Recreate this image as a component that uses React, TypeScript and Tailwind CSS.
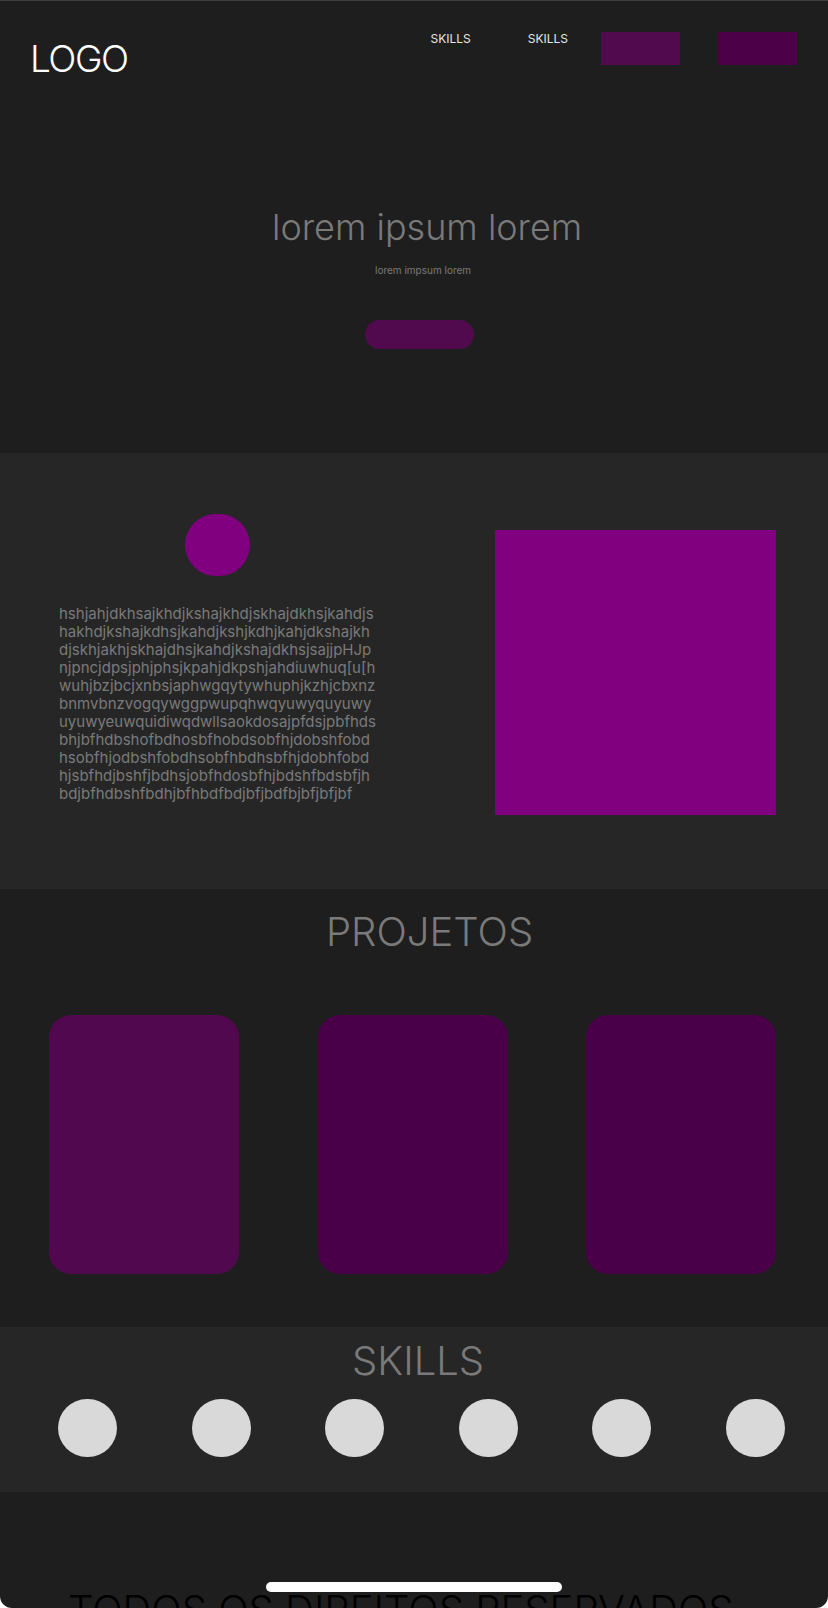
const font = "font-['Inter','Liberation_Sans',sans-serif]";

const aboutLines = [
  "hshjahjdkhsajkhdjkshajkhdjskhajdkhsjkahdjs",
  "hakhdjkshajkdhsjkahdjkshjkdhjkahjdkshajkh",
  "djskhjakhjskhajdhsjkahdjkshajdkhsjsajjpHJp",
  "njpncjdpsjphjphsjkpahjdkpshjahdiuwhuq[u[h",
  "wuhjbzjbcjxnbsjaphwgqytywhuphjkzhjcbxnz",
  "bnmvbnzvogqywggpwupqhwqyuwyquyuwy",
  "uyuwyeuwquidiwqdwllsaokdosajpfdsjpbfhds",
  "bhjbfhdbshofbdhosbfhobdsobfhjdobshfobd",
  "hsobfhjodbshfobdhsobfhbdhsbfhjdobhfobd",
  "hjsbfhdjbshfjbdhsjobfhdosbfhjbdshfbdsbfjh",
  "bdjbfhdbshfbdhjbfhbdfbdjbfjbdfbjbfjbfjbf",
];

const cards = ["bg-[#51084e]", "bg-[#4a0048]", "bg-[#4a0048]"];

export default function App() {
  return (
    <div className={`w-[828px] h-[1608px] bg-white overflow-hidden ${font}`}>
      <div className="relative w-full h-full bg-[#1e1e1e] rounded-b-[12px] overflow-hidden border-t border-[#3e3e3e]">
        {/* Hero */}
        <section className="h-[452px]">
          <header className="flex items-start justify-between pl-[30px] pr-[31px]">
            <h1 className="mt-[39px] text-[37px] leading-none font-light tracking-[-1.5px] text-white">LOGO</h1>
            <nav className="flex items-start mt-[31px]">
              <a className="mt-[1px] text-[12px] leading-none text-[#e6e6e6]">SKILLS</a>
              <a className="ml-[57px] mt-[1px] text-[12px] leading-none text-[#e6e6e6]">SKILLS</a>
              <div className="ml-[33px] w-[79px] h-[33px] bg-[#520a4f]" />
              <div className="ml-[38px] w-[79px] h-[33px] bg-[#4b0047]" />
            </nav>
          </header>
          <div className="flex flex-col items-start">
            <h2 className="mt-[132px] ml-[272px] text-[36px] leading-none font-light text-[#7a7a7a]">lorem ipsum lorem</h2>
            <p className="mt-[20px] ml-[375px] text-[10px] leading-none text-[#7a7a7a]">lorem impsum lorem</p>
            <button className="mt-[45px] ml-[365px] w-[109px] h-[29px] rounded-full bg-[#520a4f]" />
          </div>
        </section>

        {/* About */}
        <section className="h-[436px] bg-[#262626] flex items-start">
          <div className="ml-[59px] w-[316px] flex flex-col items-center pt-[61px]">
            <div className="w-[65px] h-[62px] rounded-full bg-[#800080]" />
            <p className="mt-[29px] w-full text-[15px] leading-[18px] text-[#7a7a7a]">
              {aboutLines.map((l, i) => (
                <span key={i} className="block whitespace-nowrap">{l}</span>
              ))}
            </p>
          </div>
          <div className="ml-auto mr-[52px] mt-[77px] w-[281px] h-[285px] bg-[#800080]" />
        </section>

        {/* Projetos */}
        <section className="h-[438px] pt-[23px]">
          <h2 className="ml-[326px] text-[40px] leading-none font-light text-[#7a7a7a]">PROJETOS</h2>
          <div className="mt-[63px] flex justify-between pl-[49px] pr-[52px]">
            {cards.map((c, i) => (
              <div key={i} className={`w-[190px] h-[259px] rounded-[22px] ${c}`} />
            ))}
          </div>
        </section>

        {/* Skills */}
        <section className="h-[165px] bg-[#262626] pt-[14px]">
          <h2 className="ml-[352px] text-[40px] leading-none font-light text-[#7a7a7a]">SKILLS</h2>
          <div className="mt-[18px] flex gap-[74.6px] pl-[58px]">
            {[0, 1, 2, 3, 4, 5].map((i) => (
              <div key={i} className="w-[59px] h-[58px] rounded-full bg-[#d9d9d9]" />
            ))}
          </div>
        </section>

        {/* Footer */}
        <footer className="pt-[98px] pl-[68px]">
          <p className="text-[40px] leading-none font-light text-black whitespace-nowrap">TODOS OS DIREITOS RESERVADOS</p>
        </footer>

        <div className="absolute left-[266px] top-[1581px] w-[296px] h-[10px] rounded-full bg-white" />
      </div>
    </div>
  );
}
